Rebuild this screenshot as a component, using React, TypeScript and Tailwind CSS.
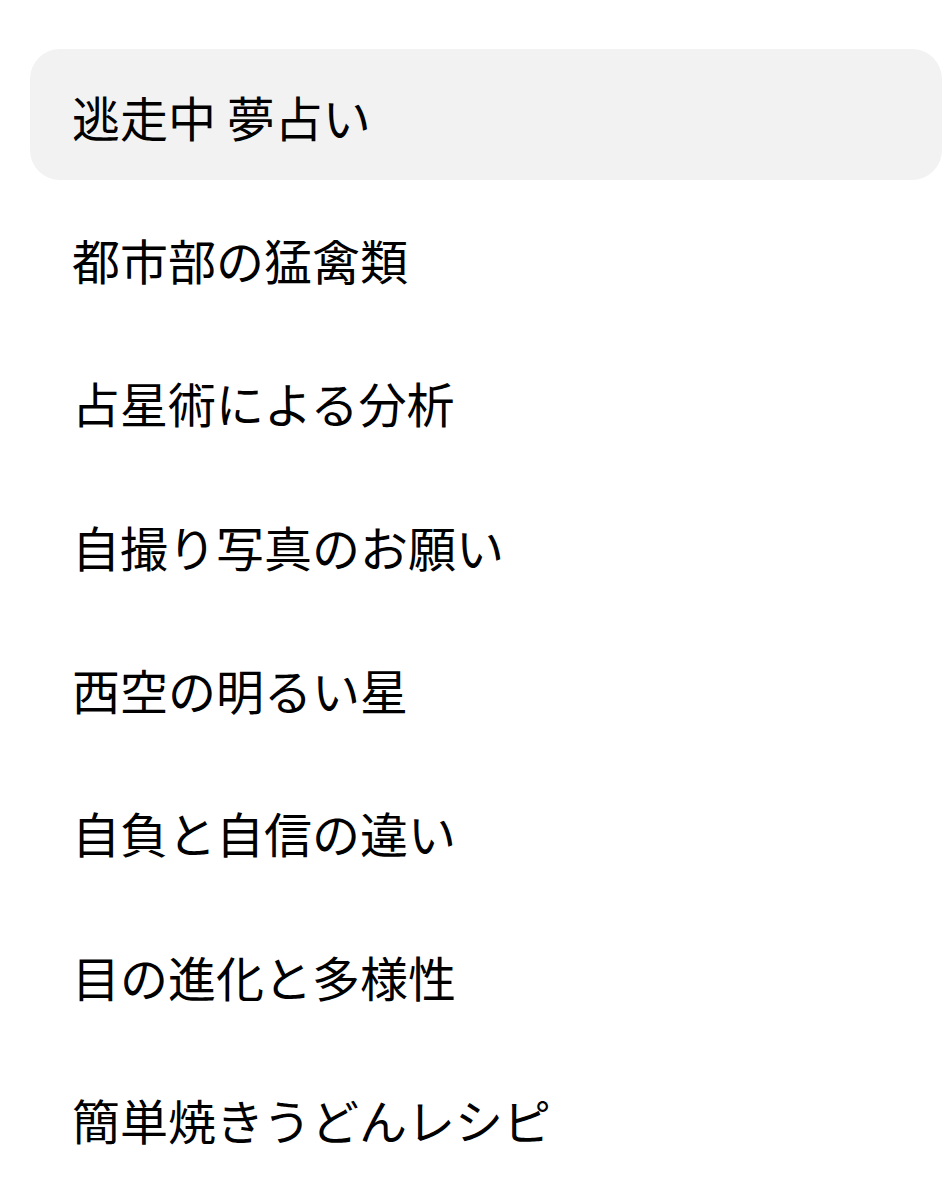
import React from 'react'

const items = [
  '逃走中 夢占い',
  '都市部の猛禽類',
  '占星術による分析',
  '自撮り写真のお願い',
  '西空の明るい星',
  '自負と自信の違い',
  '目の進化と多様性',
  '簡単焼きうどんレシピ',
]

const App = () => {
  return (
    <div
      className="min-h-screen bg-white pt-[49px] pl-[30px] pr-[7px]"
      style={{ fontFamily: '"Noto Sans CJK JP", "Noto Sans", sans-serif' }}
    >
      <ul className="flex flex-col gap-[12.4px]">
        {items.map((item, i) => (
          <li
            key={i}
            className={`flex h-[131px] items-center rounded-[30px] pl-[42px] pt-[2px] text-[48px] leading-none text-black ${
              i === 0 ? 'bg-[#f2f2f2]' : ''
            }`}
          >
            {item}
          </li>
        ))}
      </ul>
    </div>
  )
}

export default App
